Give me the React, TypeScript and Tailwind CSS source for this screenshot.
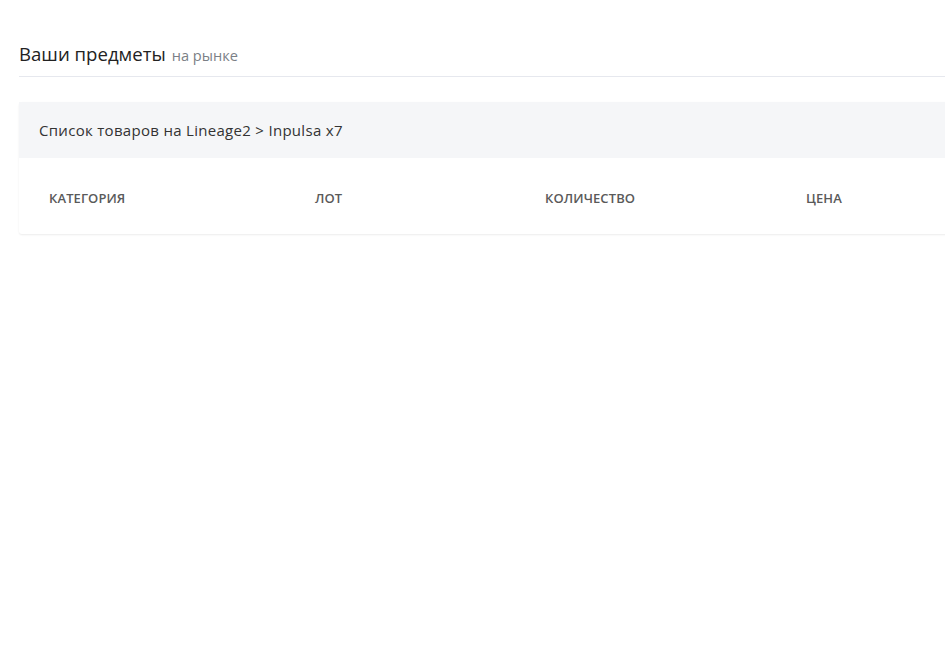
import React from "react";

const columns = [
  { label: "Категория", width: "w-[266px]" },
  { label: "Лот", width: "w-[230px]" },
  { label: "Количество", width: "w-[261px]" },
  { label: "Цена", width: "w-[260px]" },
];

export default function App() {
  return (
    <div className="min-h-screen w-full overflow-hidden bg-white font-['Open_Sans',sans-serif]">
      <div className="w-[1100px] pl-[19px] pt-[40px]">
        {/* Page title */}
        <div className="flex items-baseline gap-[6px] border-b border-[#e6e8ee] pb-[9px]">
          <h1 className="text-[18.6px] leading-[27px] text-[#222]">Ваши предметы</h1>
          <span className="text-[14.6px] text-[#7b7f86]">на рынке</span>
        </div>

        {/* Market card */}
        <div className="mt-[25px] rounded-[3px] shadow-[0_1px_2px_rgba(0,0,0,0.08)]">
          <div className="flex h-[56px] items-center bg-[#f5f6f8] px-[20px] text-[15px] tracking-[0.3px] text-[#333]">
            Список товаров на Lineage2 &gt; Inpulsa x7
          </div>
          <div className="flex h-[76px] items-center pt-[6px]">
            {columns.map((c) => (
              <div
                key={c.label}
                className={`${c.width} pl-[30px] text-[13px] font-semibold uppercase tracking-[0.1px] text-[#5a5a5a]`}
              >
                {c.label}
              </div>
            ))}
          </div>
        </div>
      </div>
    </div>
  );
}
